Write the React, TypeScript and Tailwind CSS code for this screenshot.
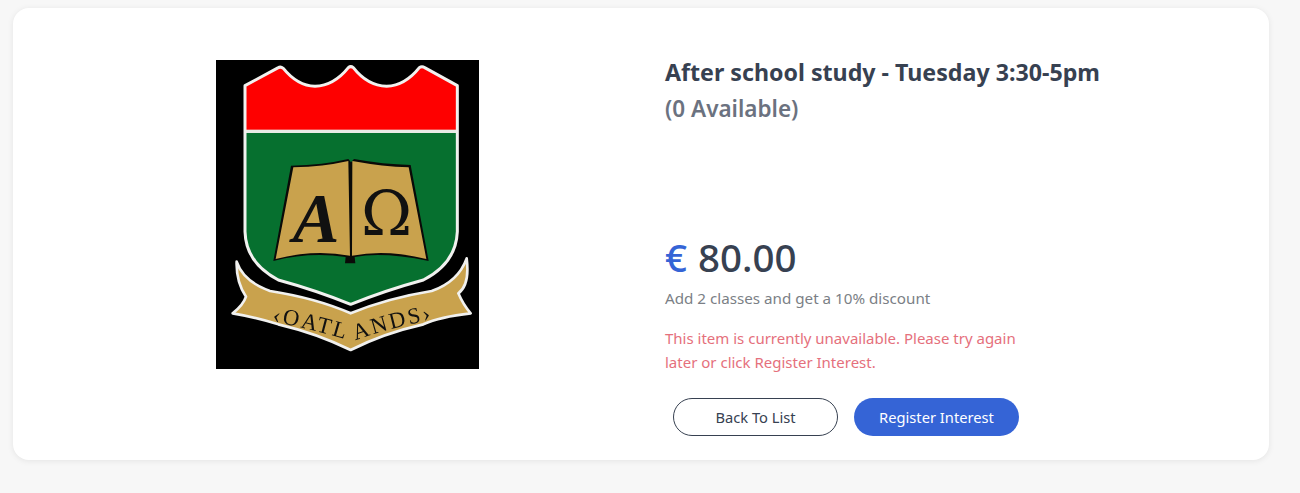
const shield =
	"M105 92 L205 38 Q212 34 220 40 Q262 92 315 94 Q372 92 415 38 Q422 32 430 38 Q472 92 530 94 Q585 92 628 38 Q636 32 644 38 L742 92 L742 530 Q738 625 640 675 Q530 705 422 748 Q315 705 205 675 Q108 625 105 530 Z";

function Crest() {
	return (
		<svg width="263" height="309" viewBox="18 15 789 927" className="block blur-[0.5px]">
			<defs>
				<clipPath id="crest-clip">
					<path d={shield} />
				</clipPath>
			</defs>
			<rect x="18" y="15" width="789" height="927" fill="#000" />
			{/* shield */}
			<g clipPath="url(#crest-clip)">
				<rect x="100" y="228" width="650" height="530" fill="#06702f" />
				<rect x="100" y="30" width="650" height="196" fill="#fe0000" />
				<rect x="100" y="224" width="650" height="10" fill="#e8ece6" />
			</g>
			<path d={shield} fill="none" stroke="#f1f1ef" strokeWidth="9" strokeLinejoin="round" />
			{/* book */}
			<path
				d="M243 332 Q340 330 415 312 L423 322 L432 312 Q520 328 602 330 L656 618 Q520 590 434 606 L436 625 L405 625 L407 606 Q300 590 190 618 Z"
				fill="#0a0a08"
			/>
			<path d="M250 337 Q340 335 415 318 L420 602 Q310 582 197 612 Z" fill="#c9a24d" />
			<path d="M427 318 Q520 335 596 337 L649 612 Q530 582 426 602 Z" fill="#c9a24d" />
			<text
				x="318"
				y="560"
				textAnchor="middle"
				fontFamily="'Liberation Serif', serif"
				fontStyle="italic"
				fontWeight="700"
				fontSize="210"
				fill="#111"
			>
				A
			</text>
			<text
				x="530"
				y="540"
				textAnchor="middle"
				fontFamily="'DejaVu Serif', serif"
				fontSize="185"
				fill="#111"
			>
				Ω
			</text>
			{/* ribbon */}
			<path
				d="M80 620 Q100 680 180 708 Q320 730 422 775 Q530 730 665 708 Q745 680 770 610 Q780 690 745 715 Q760 750 782 775 Q690 785 640 808 Q520 835 422 885 Q320 835 205 808 Q130 785 68 775 Q100 750 108 725 Q78 680 80 620 Z"
				fill="#c9a24d"
				stroke="#f1f1ef"
				strokeWidth="8"
				strokeLinejoin="round"
			/>
			<path id="crest-left" d="M186 800 Q300 820 424 858" fill="none" />
			<path id="crest-right" d="M436 856 Q550 815 690 790" fill="none" />
			<text fontFamily="'Liberation Serif', serif" fontSize="68" fill="#111" letterSpacing="7">
				<textPath href="#crest-left">‹OATL</textPath>
			</text>
			<text fontFamily="'Liberation Serif', serif" fontSize="68" fill="#111" letterSpacing="7">
				<textPath href="#crest-right">ANDS›</textPath>
			</text>
		</svg>
	);
}

export default function App() {
	return (
		<div
			className="min-h-[493px] bg-[#f7f7f7] pt-2 pl-[13px] pr-[31px] pb-[33px]"
			style={{ fontFamily: "'Noto Sans', sans-serif" }}
		>
			<div className="flex h-[452px] rounded-2xl bg-white shadow-[0_1px_6px_rgba(0,0,0,0.08)]">
				<div className="flex w-[652px] justify-center pl-4 pt-[52px]">
					<div>
						<Crest />
					</div>
				</div>

				<div className="flex w-[370px] flex-col pt-[47px] text-[#374151]">
					<h1 className="whitespace-nowrap text-[23.2px] leading-[34px] font-bold">
						After school study - Tuesday 3:30-5pm
					</h1>
					<p className="mt-[2px] text-[22.5px] leading-[36px] font-semibold text-[#6b7280]">
						(0 Available)
					</p>

					<div className="mt-[104px] text-[38.5px] leading-[52px] font-medium">
						<span className="text-[#3564d6]">€</span>
						<span className="ml-[11px]">80.00</span>
					</div>
					<p className="mt-[3px] text-[15.2px] leading-6 text-[#7b7f86]">
						Add 2 classes and get a 10% discount
					</p>
					<p className="mt-[16px] text-[15px] leading-6 text-[#e5707c]">
						This item is currently unavailable. Please try again later or click Register Interest.
					</p>

					<div className="mt-[24px] flex gap-4 pl-2">
						<button className="h-[38px] w-[165px] rounded-full border border-[#374151] bg-white text-[14.7px] text-[#374151]">
							Back To List
						</button>
						<button className="h-[38px] w-[165px] rounded-full bg-[#3564d6] text-[14.7px] text-white">
							Register Interest
						</button>
					</div>
				</div>
			</div>
		</div>
	);
}
